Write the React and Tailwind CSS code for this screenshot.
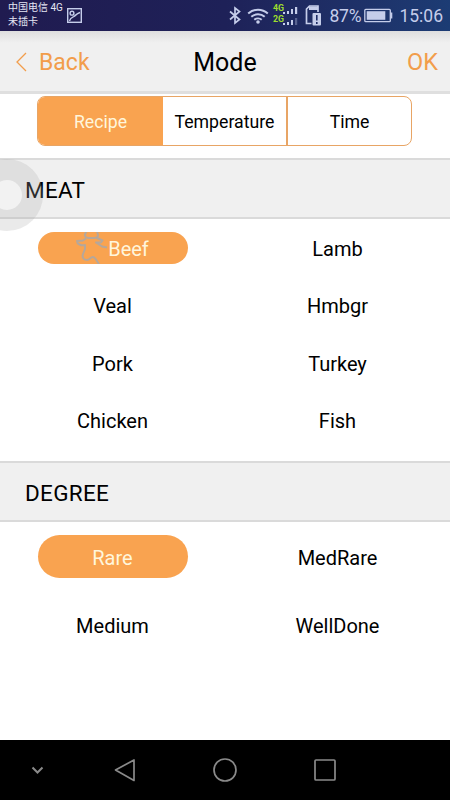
const ORANGE_PILL = 'bg-[#f9a350] text-[#fff6dc]';

function StatusBar() {
  return (
    <div className="flex h-[31px] shrink-0 justify-between bg-linear-to-r from-[#201b50] via-[#1e2158] to-[#1c3c74] text-[#c5cdea]">
      <div className="flex pl-[8px]">
        <div className="pt-[1px] font-['Roboto','Noto_Sans_CJK_SC',sans-serif] text-[10px] leading-[14px] whitespace-nowrap text-[#e4e5f3]">
          <div>中国电信 4G</div>
          <div>未插卡</div>
        </div>
        <svg className="mt-[8px] ml-[4px] h-[15px] w-[15px]" viewBox="0 0 15 15" fill="none" stroke="currentColor" strokeWidth="1.4">
          <rect x=".7" y=".7" width="13.6" height="13.6" />
          <circle cx="5" cy="5.2" r="1.9" />
          <path d="M2.5 13C3.500 9 5.500 9.500 7 8.500S9.500 5.500 13 4.500" />
        </svg>
      </div>
      <div className="flex items-center pr-[7px]">
        <svg className="h-[31px] w-[98px]" viewBox="228 0 98 31" fill="none" stroke="currentColor">
          <path d="M230 11.500l9.500 8-4.500 3.500V8l4.500 3.500-9.500 8" strokeWidth="1.700" />
          <path d="M248.2 13.5a14.5 14.5 0 0 1 19.6 0M251.3 16.8a10 10 0 0 1 13.4 0M254.3 19.8a5.7 5.7 0 0 1 7.4 0" strokeWidth="2" />
          <circle cx="258" cy="22" r="1.8" fill="currentColor" stroke="none" />
          <g fill="#9ddc2e" stroke="none" fontFamily="Roboto, sans-serif" fontWeight="700" fontSize="8.800">
            <text x="273" y="11">4G</text>
            <text x="273" y="22">2G</text>
          </g>
          <g fill="currentColor" stroke="none">
            <rect x="283" y="12" width="2" height="2" />
            <rect x="287" y="11" width="2" height="3" />
            <rect x="291" y="9" width="2" height="5" />
            <rect x="295" y="7" width="2.2" height="7" />
            <rect x="283" y="23" width="2" height="2" />
            <rect x="287" y="22" width="2" height="3" />
            <rect x="291" y="20" width="2" height="5" />
            <rect x="295" y="18" width="2.2" height="7" opacity=".35" />
          </g>
          <path d="M311.500 23.500h-5V9l3-3h8.500v6" strokeWidth="1.700" />
          <path d="M309 6.500h9v3.500h-9z" fill="currentColor" stroke="none" />
          <rect x="312.500" y="13" width="8.500" height="12.500" rx="1" fill="currentColor" stroke="none" />
          <path d="M316.800 15v5.500M316.800 22v2" stroke="#1c2a64" strokeWidth="1.600" />
        </svg>
        <span className="ml-[3px] w-[35px] pt-[2px] text-[17.500px] leading-none tracking-[-0.200px]">87%</span>
        <svg className="h-[15px] w-[29px]" viewBox="0 0 29 15" fill="none" stroke="currentColor">
          <rect x=".8" y="1.300" width="25.500" height="12.400" rx="1" strokeWidth="1.300" />
          <rect x="2.700" y="3.200" width="18.600" height="8.600" fill="currentColor" stroke="none" />
          <path d="M27.300 4.500v6" strokeWidth="2" />
        </svg>
        <span className="ml-[6px] pt-[2px] text-[17.500px] leading-none">15:06</span>
      </div>
    </div>
  );
}

function Header() {
  return (
    <header className="grid h-[63px] shrink-0 grid-cols-3 items-center border-b-[3px] border-[#dfdfdf] bg-linear-to-b from-[#dedede] via-[#f0f0f0] via-20% to-[#f0f0f0] pt-[2px] text-[#f29d4b]">
      <div className="flex items-center pl-[16px]">
        <svg className="h-[20px] w-[11px]" viewBox="0 0 11 20" fill="none" stroke="currentColor" strokeWidth="1.300">
          <path d="M10 1L1 10l9 9" />
        </svg>
        <span className="ml-[12px] text-[23px] leading-none">Back</span>
      </div>
      <h1 className="pt-[1px] text-center text-[25px] leading-none text-black">Mode</h1>
      <div className="pt-[2px] pr-[12px] text-right text-[23.500px] leading-none">OK</div>
    </header>
  );
}

function Tabs() {
  return (
    <div className="h-[64px] shrink-0 bg-white px-[37px] pt-[2px]">
      <div className="grid h-[50px] w-[375px] grid-cols-[125px_125px_1fr] overflow-hidden rounded-[8px] border-[1.500px] border-[#e8a565] text-[17.700px] text-black">
        <div className={`flex items-center justify-center pt-[2px] ${ORANGE_PILL}`}>Recipe</div>
        <div className="flex items-center justify-center border-r-2 border-[#e8a565] pt-[2px]">Temperature</div>
        <div className="flex items-center justify-center pt-[2px]">Time</div>
      </div>
    </div>
  );
}

function SectionTitle({ children }) {
  return (
    <h2 className="flex h-[61px] shrink-0 items-center border-y-[2.500px] border-[#dadada] bg-[#f0f0f0] pt-[4px] pl-[25px] text-[22.500px] leading-none tracking-[0.300px] text-black">
      {children}
    </h2>
  );
}

function Option({ label, pill }) {
  return (
    <div className="flex items-center justify-center">
      <span className={pill ? `flex w-[150px] items-center justify-center rounded-full ${pill} ${ORANGE_PILL}` : 'pt-[2px]'}>{label}</span>
    </div>
  );
}

function Cow() {
  return (
    <svg className="h-[32px] w-[32px]" viewBox="0 0 32 32" fill="none" stroke="#b5a79b" strokeWidth="2" strokeLinejoin="round">
      <path d="M10.500 0C7.500 3 9 6 13 6h5c4 0 5-2 3-6" />
      <path d="M10 6.500L7 8.500 1 9c0 3 4 5 8 4v4l-2 5c-1 3 0 6 4 6 3 0 3-3 6-3 2 0 3 3 6 7" />
      <path d="M20 5.500l6.500 3-1.500 2h-5l6 4 5 1" />
    </svg>
  );
}

export default function App() {
  return (
    <main className="flex h-[800px] w-[450px] flex-col overflow-hidden bg-white font-[Roboto,sans-serif]">
      <StatusBar />
      <Header />
      <Tabs />
      <div className="relative shrink-0">
        <SectionTitle>MEAT</SectionTitle>
        <div className="absolute top-[1px] -left-[29px] flex h-[72px] w-[72px] items-center justify-center rounded-full bg-[#aaaaaa]/25">
          <div className="h-[30px] w-[30px] rounded-full bg-white/60" />
        </div>
      </div>
      <div className="grid h-[242px] shrink-0 grid-cols-2 auto-rows-[57.500px] text-[20px] text-black">
        <Option label={<span className="flex items-center"><Cow /><span className="pt-[2px]">Beef</span></span>} pill="h-[32px]" />
        <Option label="Lamb" />
        <Option label="Veal" />
        <Option label="Hmbgr" />
        <Option label="Pork" />
        <Option label="Turkey" />
        <Option label="Chicken" />
        <Option label="Fish" />
      </div>
      <SectionTitle>DEGREE</SectionTitle>
      <div className="grid shrink-0 grow grid-cols-2 content-start auto-rows-[68px] text-[20px] text-black">
        <Option label={<span className="pt-[3px]">Rare</span>} pill="h-[43px]" />
        <Option label={<span className="block pt-[2px]">MedRare</span>} />
        <Option label={<span className="block pt-[2px]">Medium</span>} />
        <Option label={<span className="block pt-[2px]">WellDone</span>} />
      </div>
      <nav className="flex h-[60px] shrink-0 bg-black">
        <svg className="h-[60px] w-[450px]" viewBox="0 0 450 60" fill="none" stroke="#8a8a8a" strokeWidth="1.700">
          <path d="M32.500 27.500l5 5 5-5" strokeWidth="2" />
          <path d="M134 20v20.500L115.500 30z" strokeLinejoin="round" />
          <circle cx="225" cy="30" r="11" />
          <rect x="315" y="20" width="20" height="20" rx="1" />
        </svg>
      </nav>
    </main>
  );
}
